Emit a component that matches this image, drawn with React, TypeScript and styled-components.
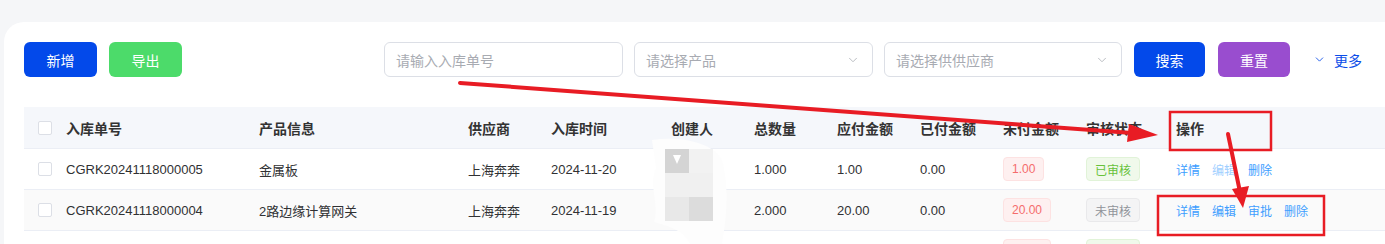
import React from "react";
import styled, { createGlobalStyle } from "styled-components";
import { ChevronDown } from "lucide-react";

const GlobalStyle = createGlobalStyle`
	html, body {
		margin: 0;
		padding: 0;
		background: #f5f6f8;
		overflow: hidden;
	}
	body {
		font-family: "Liberation Sans", "Noto Sans CJK SC", sans-serif;
		color: #303133;
	}
`;

const Page = styled.div`
	position: relative;
	padding: 22px 0 0 4px;
	height: 244px;
	box-sizing: border-box;
`;

const Card = styled.div`
	background: #fff;
	border-radius: 20px 0 0 0;
	padding: 20px 0 0 20px;
	margin-right: -40px;
	height: 400px;
`;

const Toolbar = styled.div`
	display: flex;
	align-items: center;
	height: 35px;
`;

const Group = styled.div<{ $gap: number; $offset?: number }>`
	display: flex;
	align-items: center;
	gap: ${p => p.$gap}px;
	margin-left: ${p => p.$offset ?? 0}px;
`;

const Button = styled.button<{ $color: string; $width: number }>`
	height: 35px;
	width: ${p => p.$width}px;
	border: none;
	border-radius: 6px;
	background: ${p => p.$color};
	color: #fff;
	font-family: inherit;
	font-size: 14px;
	padding: 0;
`;

const Field = styled.div<{ $width: number }>`
	width: ${p => p.$width}px;
	height: 35px;
	box-sizing: border-box;
	border: 1px solid #dcdfe6;
	border-radius: 6px;
	display: flex;
	align-items: center;
	justify-content: space-between;
	padding: 0 12px 0 11px;
	color: #a8abb2;
	font-size: 14px;
`;

const MoreLink = styled.div`
	display: flex;
	align-items: center;
	gap: 8px;
	color: #0b4de8;
	font-size: 14px;
	margin-left: 23px;
`;

const columns = "30px 193px 209px 83px 120px 83px 83px 83px 83px 83px 90px 1fr";

const Table = styled.div`
	margin-top: 30px;
`;

const Row = styled.div<{ $bg: string; $head?: boolean }>`
	display: grid;
	grid-template-columns: ${columns};
	height: ${p => (p.$head ? 42 : 41)}px;
	box-sizing: border-box;
	border-bottom: 1px solid #ebeef5;
	background: ${p => p.$bg};
	align-items: center;
	font-size: ${p => (p.$head ? 14 : 13)}px;
	font-weight: ${p => (p.$head ? 700 : 400)};
	color: ${p => (p.$head ? "#333" : "#303133")};
`;

const Cell = styled.div`
	padding-left: 12px;
	white-space: nowrap;
	display: flex;
	align-items: center;
	gap: 12px;
`;

const CheckCell = styled.div`
	padding-left: 14px;
	display: flex;
	align-items: center;
`;

const Check = styled.span`
	width: 14px;
	height: 14px;
	box-sizing: border-box;
	border: 1px solid #dcdfe6;
	border-radius: 2px;
	background: #fff;
`;

const tagColors = {
	danger: { bg: "#fef0f0", border: "#fde2e2", color: "#f56c6c" },
	success: { bg: "#f0f9eb", border: "#e1f3d8", color: "#67c23a" },
	info: { bg: "#f4f4f5", border: "#e9e9eb", color: "#909399" },
};

type TagType = keyof typeof tagColors;

const Tag = styled.span<{ $type: TagType }>`
	display: inline-flex;
	align-items: center;
	height: 24px;
	box-sizing: border-box;
	padding: 0 8px;
	border-radius: 4px;
	font-size: 12px;
	border: 1px solid ${p => tagColors[p.$type].border};
	background: ${p => tagColors[p.$type].bg};
	color: ${p => tagColors[p.$type].color};
`;

const Action = styled.span<{ $disabled?: boolean }>`
	font-size: 12px;
	color: ${p => (p.$disabled ? "#a0cfff" : "#409eff")};
`;

const Overlay = styled.svg`
	position: absolute;
	left: 0;
	top: 0;
	pointer-events: none;
`;

interface rowItem {
	no: string;
	product: string;
	supplier: string;
	date: string;
	qty: string;
	payable: string;
	paid: string;
	unpaid: string;
	status: { label: string; type: TagType };
	actions: { label: string; disabled?: boolean }[];
}

const rows: rowItem[] = [
	{
		no: "CGRK20241118000005",
		product: "金属板",
		supplier: "上海奔奔",
		date: "2024-11-20",
		qty: "1.000",
		payable: "1.00",
		paid: "0.00",
		unpaid: "1.00",
		status: { label: "已审核", type: "success" },
		actions: [{ label: "详情" }, { label: "编辑", disabled: true }, { label: "删除" }],
	},
	{
		no: "CGRK20241118000004",
		product: "2路边缘计算网关",
		supplier: "上海奔奔",
		date: "2024-11-19",
		qty: "2.000",
		payable: "20.00",
		paid: "0.00",
		unpaid: "20.00",
		status: { label: "未审核", type: "info" },
		actions: [{ label: "详情" }, { label: "编辑" }, { label: "审批" }, { label: "删除" }],
	},
	{
		no: "CGRK20241118000003",
		product: "金属板",
		supplier: "上海奔奔",
		date: "2024-11-18",
		qty: "2.000",
		payable: "20.00",
		paid: "0.00",
		unpaid: "20.00",
		status: { label: "已审核", type: "success" },
		actions: [{ label: "详情" }, { label: "编辑", disabled: true }, { label: "删除" }],
	},
];

const headers = ["入库单号", "产品信息", "供应商", "入库时间", "创建人", "总数量", "应付金额", "已付金额", "未付金额", "审核状态", "操作"];

const red = "#e81c24";

const Annotations = () => (
	<Overlay width={1385} height={244}>
		{/* blurred creator column */}
		<path
			d="M652 140 C 680 136, 712 142, 722 160 C 730 190, 726 220, 722 244 L 690 244 C 684 230, 668 226, 654 222 C 660 205, 648 185, 656 168 Z"
			fill="#fdfdfd"
		/>
		<rect x={665} y={149} width={24} height={24} fill="#d4d4d4" />
		<rect x={689} y={149} width={24} height={24} fill="#f2f2f2" />
		<rect x={665} y={173} width={48} height={24} fill="#f0f0f0" />
		<rect x={665} y={197} width={24} height={24} fill="#e8e8e8" />
		<rect x={689} y={197} width={24} height={24} fill="#dcdcdc" />
		<path d="M673 155 L681 155 L677 164 Z" fill="#fff" />
		{/* arrows and boxes */}
		<line x1={460} y1={83} x2={1132} y2={133} stroke={red} strokeWidth={4} strokeLinecap="round" />
		<path d="M1158 135 L1129 124 L1127 142 Z" fill={red} />
		<rect x={1170} y={112} width={101} height={38} fill="none" stroke={red} strokeWidth={2.5} />
		<line x1={1228} y1={134} x2={1240} y2={192} stroke={red} strokeWidth={4} strokeLinecap="round" />
		<path d="M1243 208 L1232 189 L1249 186 Z" fill={red} />
		<rect x={1158} y={196} width={166} height={39} fill="none" stroke={red} strokeWidth={2.5} />
	</Overlay>
);

export default function App() {
	return (
		<>
			<GlobalStyle />
			<Page>
				<Card>
					<Toolbar>
						<Group $gap={12}>
							<Button $color="#0349ea" $width={73}>新增</Button>
							<Button $color="#4cdb6a" $width={73}>导出</Button>
						</Group>
						<Group $gap={11} $offset={202}>
							<Field $width={239}>请输入入库单号</Field>
							<Field $width={239}>
								请选择产品
								<ChevronDown size={14} strokeWidth={1.5} color="#b0b3b9" />
							</Field>
							<Field $width={238}>
								请选择供供应商
								<ChevronDown size={14} strokeWidth={1.5} color="#b0b3b9" />
							</Field>
						</Group>
						<Group $gap={13} $offset={12}>
							<Button $color="#0349ea" $width={71}>搜索</Button>
							<Button $color="#994dcf" $width={72}>重置</Button>
						</Group>
						<MoreLink>
							<ChevronDown size={13} strokeWidth={1.6} />
							更多
						</MoreLink>
					</Toolbar>
					<Table>
						<Row $bg="#f5f7fb" $head>
							<CheckCell>
								<Check />
							</CheckCell>
							{headers.map(h => (
								<Cell key={h}>{h}</Cell>
							))}
						</Row>
						{rows.map((r, i) => (
							<Row key={r.no} $bg={i % 2 === 1 ? "#fafafa" : "#fff"}>
								<CheckCell>
									<Check />
								</CheckCell>
								<Cell>{r.no}</Cell>
								<Cell>{r.product}</Cell>
								<Cell>{r.supplier}</Cell>
								<Cell>{r.date}</Cell>
								<Cell />
								<Cell>{r.qty}</Cell>
								<Cell>{r.payable}</Cell>
								<Cell>{r.paid}</Cell>
								<Cell>
									<Tag $type="danger">{r.unpaid}</Tag>
								</Cell>
								<Cell>
									<Tag $type={r.status.type}>{r.status.label}</Tag>
								</Cell>
								<Cell>
									{r.actions.map(a => (
										<Action key={a.label} $disabled={a.disabled}>
											{a.label}
										</Action>
									))}
								</Cell>
							</Row>
						))}
					</Table>
				</Card>
				<Annotations />
			</Page>
		</>
	);
}
